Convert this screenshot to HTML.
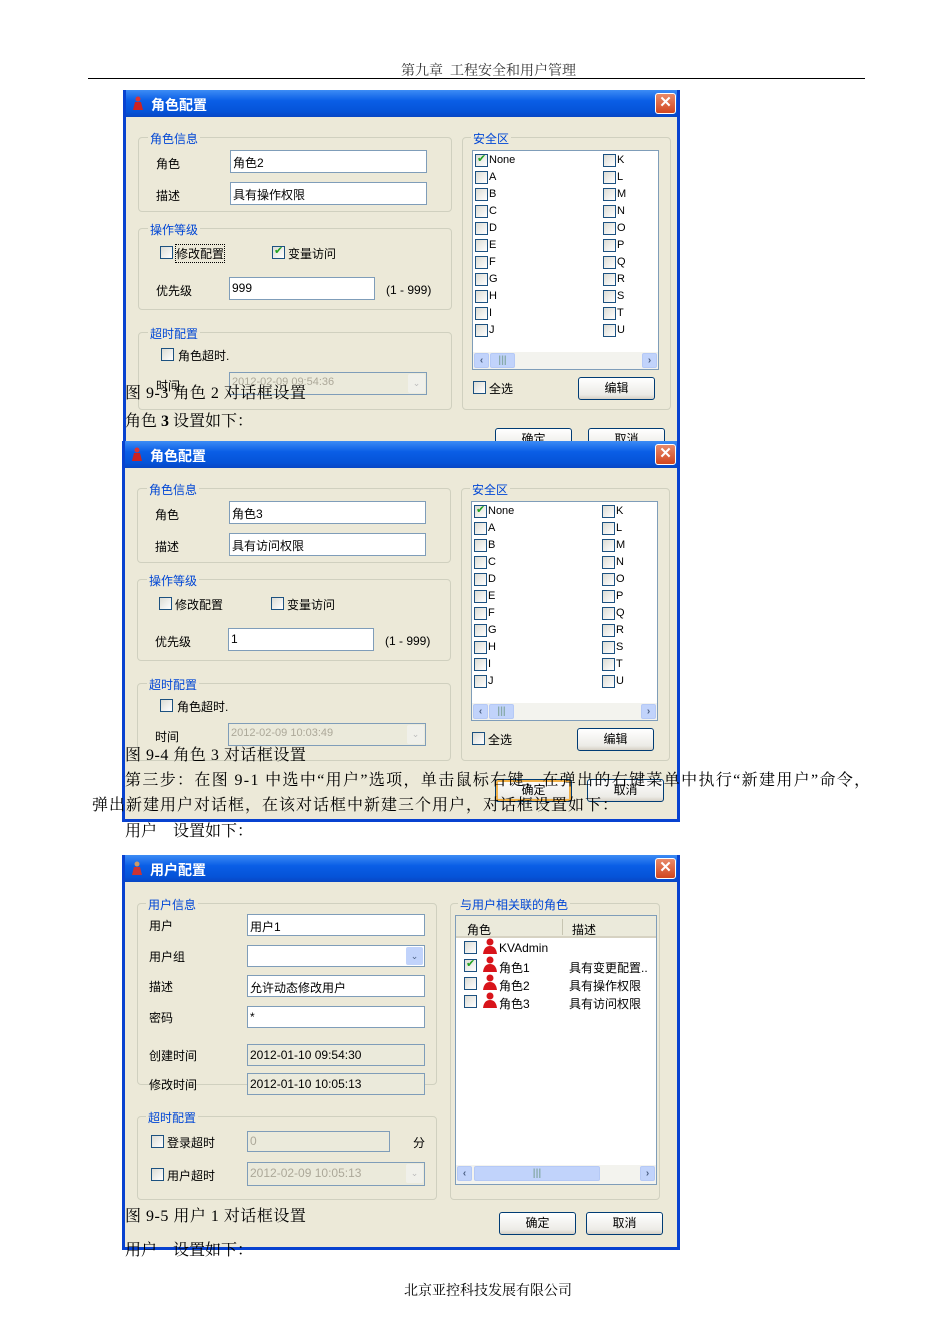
<!DOCTYPE html>
<html><head><meta charset="utf-8"><style>
*{margin:0;padding:0;box-sizing:border-box}
body{width:950px;height:1344px;background:#fff;position:relative;overflow:hidden;font-family:"Liberation Sans","Noto Sans CJK SC",sans-serif;font-size:12px;color:#000}
.a{position:absolute;white-space:nowrap}
.dlg{position:absolute;background:#ece9d8;border:3px solid #0842d0;border-top:none;overflow:hidden}
.tb{position:absolute;left:-3px;right:-3px;top:0;height:27px;background:linear-gradient(#3d8cf5,#0a5ee6 40%,#0553d8 80%,#0846c4);color:#fff;font-weight:bold;font-size:14px}
.tb span{position:absolute;left:28px;top:5px}
.ico{position:absolute;left:10px;top:6px;width:10px;height:14px}
.x{position:absolute;right:4px;top:3px;width:21px;height:21px;background:linear-gradient(#e88a6a,#d2461f);border:1px solid #fff;border-radius:3px;color:#fff;font-size:15px;font-weight:bold;text-align:center;line-height:18px}
.g{position:absolute;border:1px solid #d0d0bf;border-radius:4px}
.gl{position:absolute;color:#0046d5;background:#ece9d8;padding:0 2px;font-size:12px}
.in{position:absolute;background:#fff;border:1px solid #7f9db9;height:23px;padding:3px 2px;font-size:12px}
.dis{background:#ebeadb;color:#aca899}
.cb{position:absolute;width:13px;height:13px;border:1px solid #1c5180;background:linear-gradient(135deg,#dcdcd5,#fff)}
.ck::after{content:"✔";position:absolute;left:1px;top:-3px;color:#21a121;font-size:11px}
.bt{position:absolute;height:23px;border:1px solid #003c74;border-radius:3px;background:linear-gradient(#fff,#ecebe6 80%,#d6d0c5);text-align:center;line-height:21px;font-size:12px}
.lb{position:absolute;background:#fff;border:1px solid #7f9db9}
.sb{position:absolute;left:0;right:0;bottom:0;height:17px;background:#f3f3ee}
.sa{position:absolute;top:1px;width:15px;height:15px;background:#c1d3fb;border:1px solid #b5c9f6;border-radius:2px;font-size:10px;line-height:13px;text-align:center;color:#4d6185;font-weight:bold}
.dd{position:absolute;right:1px;top:1px;width:17px;height:19px;background:#c1d3fb;border-radius:2px;color:#4d6185;font-size:9px;text-align:center;line-height:19px}
.sf{font-family:"Liberation Serif","Noto Serif CJK SC",serif;font-size:16px}
</style></head><body>

<div class="a sf" style="left:401px;top:60px;font-size:14px;color:#333">第九章&nbsp;&nbsp;工程安全和用户管理</div>
<div class="a" style="left:88px;top:78px;width:777px;height:1px;background:#000"></div>

<!-- Dialog 1 -->
<div class="dlg" style="left:123px;top:90px;width:557px;height:381px">
 <div class="tb"><svg class="ico" viewBox="0 0 10 14"><circle cx="5" cy="3" r="2.5" fill="#d33"/><path d="M0 14 L2 6 L8 6 L10 14Z" fill="#c22"/></svg><span>角色配置</span><div class="x">✕</div></div>
 <div class="g" style="left:12px;top:47px;width:314px;height:75px"></div><div class="gl" style="left:22px;top:40px">角色信息</div>
 <div class="a" style="left:30px;top:65px">角色</div><div class="in" style="left:104px;top:60px;width:197px">角色2</div>
 <div class="a" style="left:30px;top:97px">描述</div><div class="in" style="left:104px;top:92px;width:197px">具有操作权限</div>
 <div class="g" style="left:12px;top:138px;width:314px;height:82px"></div><div class="gl" style="left:22px;top:131px">操作等级</div>
 <div class="cb" style="left:34px;top:156px"></div><div class="a" style="left:50px;top:155px;outline:1px dotted #000">修改配置</div>
 <div class="cb ck" style="left:146px;top:156px"></div><div class="a" style="left:162px;top:155px">变量访问</div>
 <div class="a" style="left:30px;top:192px">优先级</div><div class="in" style="left:103px;top:187px;width:146px">999</div><div class="a" style="left:260px;top:193px">(1 - 999)</div>
 <div class="g" style="left:12px;top:242px;width:314px;height:78px"></div><div class="gl" style="left:22px;top:235px">超时配置</div>
 <div class="cb" style="left:35px;top:258px"></div><div class="a" style="left:52px;top:257px">角色超时.</div>
 <div class="a" style="left:30px;top:287px">时间</div><div class="in dis" style="left:103px;top:282px;width:198px;font-size:11px">2012-02-09 09:54:36<div class="dd" style="background:#f0f0ea;color:#bbb">⌄</div></div>
 <div class="g" style="left:336px;top:47px;width:209px;height:273px"></div><div class="gl" style="left:345px;top:40px">安全区</div>
 <div class="lb" style="left:346px;top:60px;width:187px;height:220px" id="l1"></div>
 <div class="cb" style="left:347px;top:291px"></div><div class="a" style="left:363px;top:290px">全选</div>
 <div class="bt" style="left:452px;top:287px;width:77px">编辑</div>
 <div class="bt" style="left:369px;top:338px;width:77px">确定</div><div class="bt" style="left:462px;top:338px;width:77px">取消</div>
</div>

<!-- Dialog 2 -->
<div class="dlg" style="left:122px;top:441px;width:558px;height:381px">
 <div class="tb"><svg class="ico" viewBox="0 0 10 14"><circle cx="5" cy="3" r="2.5" fill="#d33"/><path d="M0 14 L2 6 L8 6 L10 14Z" fill="#c22"/></svg><span>角色配置</span><div class="x">✕</div></div>
 <div class="g" style="left:12px;top:47px;width:314px;height:75px"></div><div class="gl" style="left:22px;top:40px">角色信息</div>
 <div class="a" style="left:30px;top:65px">角色</div><div class="in" style="left:104px;top:60px;width:197px">角色3</div>
 <div class="a" style="left:30px;top:97px">描述</div><div class="in" style="left:104px;top:92px;width:197px">具有访问权限</div>
 <div class="g" style="left:12px;top:138px;width:314px;height:82px"></div><div class="gl" style="left:22px;top:131px">操作等级</div>
 <div class="cb" style="left:34px;top:156px"></div><div class="a" style="left:50px;top:155px">修改配置</div>
 <div class="cb" style="left:146px;top:156px"></div><div class="a" style="left:162px;top:155px">变量访问</div>
 <div class="a" style="left:30px;top:192px">优先级</div><div class="in" style="left:103px;top:187px;width:146px">1</div><div class="a" style="left:260px;top:193px">(1 - 999)</div>
 <div class="g" style="left:12px;top:242px;width:314px;height:78px"></div><div class="gl" style="left:22px;top:235px">超时配置</div>
 <div class="cb" style="left:35px;top:258px"></div><div class="a" style="left:52px;top:257px">角色超时.</div>
 <div class="a" style="left:30px;top:287px">时间</div><div class="in dis" style="left:103px;top:282px;width:198px;font-size:11px">2012-02-09 10:03:49<div class="dd" style="background:#f0f0ea;color:#bbb">⌄</div></div>
 <div class="g" style="left:336px;top:47px;width:209px;height:273px"></div><div class="gl" style="left:345px;top:40px">安全区</div>
 <div class="lb" style="left:346px;top:60px;width:187px;height:220px" id="l2"></div>
 <div class="cb" style="left:347px;top:291px"></div><div class="a" style="left:363px;top:290px">全选</div>
 <div class="bt" style="left:452px;top:287px;width:77px">编辑</div>
 <div class="bt" style="left:370px;top:338px;width:77px;box-shadow:inset 0 0 0 2px #f0b048">确定</div><div class="bt" style="left:462px;top:338px;width:77px">取消</div>
</div>

<!-- Dialog 3 -->
<div class="dlg" style="left:122px;top:855px;width:558px;height:395px">
 <div class="tb"><svg class="ico" viewBox="0 0 10 14"><circle cx="5" cy="3" r="2.5" fill="#c96"/><path d="M0 14 L2 6 L8 6 L10 14Z" fill="#c33"/></svg><span>用户配置</span><div class="x">✕</div></div>
 <div class="g" style="left:12px;top:48px;width:300px;height:182px"></div><div class="gl" style="left:21px;top:41px">用户信息</div>
 <div class="a" style="left:24px;top:62px">用户</div><div class="in" style="left:122px;top:59px;width:178px;height:22px">用户1</div>
 <div class="a" style="left:24px;top:93px">用户组</div><div class="in" style="left:122px;top:90px;width:178px;height:22px"><div class="dd" style="height:18px">⌄</div></div>
 <div class="a" style="left:24px;top:123px">描述</div><div class="in" style="left:122px;top:120px;width:178px;height:22px">允许动态修改用户</div>
 <div class="a" style="left:24px;top:154px">密码</div><div class="in" style="left:122px;top:151px;width:178px;height:22px">*</div>
 <div class="a" style="left:24px;top:192px">创建时间</div><div class="in" style="left:122px;top:189px;width:178px;height:22px;background:#ebeadb">2012-01-10 09:54:30</div>
 <div class="a" style="left:24px;top:221px">修改时间</div><div class="in" style="left:122px;top:218px;width:178px;height:22px;background:#ebeadb">2012-01-10 10:05:13</div>
 <div class="g" style="left:12px;top:261px;width:300px;height:84px"></div><div class="gl" style="left:21px;top:254px">超时配置</div>
 <div class="cb" style="left:26px;top:280px"></div><div class="a" style="left:42px;top:279px">登录超时</div>
 <div class="in dis" style="left:122px;top:276px;width:143px;height:21px;padding:2px">0</div><div class="a" style="left:288px;top:279px">分</div>
 <div class="cb" style="left:26px;top:313px"></div><div class="a" style="left:42px;top:312px">用户超时</div>
 <div class="in dis" style="left:122px;top:307px;width:178px;height:24px">2012-02-09 10:05:13<div class="dd" style="background:#f0f0ea;color:#bbb">⌄</div></div>
 <div class="g" style="left:325px;top:48px;width:210px;height:297px"></div><div class="gl" style="left:333px;top:41px">与用户相关联的角色</div>
 <div class="lb" style="left:330px;top:60px;width:202px;height:270px">
  <div style="position:absolute;left:0;right:0;top:0;height:22px;background:#ebeadb;border-bottom:2px solid #d6d2c2"></div>
  <div class="a" style="left:11px;top:5px">角色</div><div class="a" style="left:106px;top:3px;width:1px;height:16px;background:#c7c5b2"></div><div class="a" style="left:116px;top:5px">描述</div>
  <div class="cb" style="left:8px;top:25px"></div><div class="cb ck" style="left:8px;top:43px"></div><div class="cb" style="left:8px;top:61px"></div><div class="cb" style="left:8px;top:79px"></div>
  <svg class="a" style="left:26px;top:22px" width="16" height="72" viewBox="0 0 16 72"><g fill="#d8141a"><circle cx="8" cy="4" r="3.5"/><path d="M1 16 Q2 8 8 8 Q14 8 15 16Z"/><circle cx="8" cy="22" r="3.5"/><path d="M1 34 Q2 26 8 26 Q14 26 15 34Z"/><circle cx="8" cy="40" r="3.5"/><path d="M1 52 Q2 44 8 44 Q14 44 15 52Z"/><circle cx="8" cy="58" r="3.5"/><path d="M1 70 Q2 62 8 62 Q14 62 15 70Z"/></g></svg>
  <div class="a" style="left:43px;top:25px">KVAdmin</div><div class="a" style="left:43px;top:43px">角色1</div><div class="a" style="left:43px;top:61px">角色2</div><div class="a" style="left:43px;top:79px">角色3</div>
  <div class="a" style="left:113px;top:43px">具有变更配置..</div><div class="a" style="left:113px;top:61px">具有操作权限</div><div class="a" style="left:113px;top:79px">具有访问权限</div>
  <div class="sb" style="height:19px"><div class="sa" style="left:1px">‹</div><div class="sa" style="left:18px;width:126px;color:#8aa">|||</div><div class="sa" style="right:1px">›</div></div>
 </div>
 <div class="bt" style="left:374px;top:357px;width:77px">确定</div><div class="bt" style="left:461px;top:357px;width:77px">取消</div>
</div>

<div class="a sf" style="left:125px;top:380px;letter-spacing:0.5px">图 9-3 角色 2 对话框设置</div>
<div class="a sf" style="left:125px;top:408px">角色 <b>3</b> 设置如下：</div>
<div class="a sf" style="left:125px;top:742px;letter-spacing:0.5px">图 9-4 角色 3 对话框设置</div>
<div class="a sf" style="left:125px;top:767px;letter-spacing:1.35px">第三步：在图 9-1 中选中“用户”选项，单击鼠标右键，在弹出的右键菜单中执行“新建用户”命令，</div>
<div class="a sf" style="left:92px;top:792px;letter-spacing:1px">弹出新建用户对话框，在该对话框中新建三个用户，对话框设置如下：</div>
<div class="a sf" style="left:125px;top:818px">用户　设置如下：</div>
<div class="a sf" style="left:125px;top:1203px;letter-spacing:0.5px">图 9-5 用户 1 对话框设置</div>
<div class="a sf" style="left:125px;top:1237px">用户　设置如下：</div>
<div class="a sf" style="left:404px;top:1280px;font-size:14px">北京亚控科技发展有限公司</div>

<script>
['l1','l2'].forEach(function(id){
 var el=document.getElementById(id),h='';
 var L=['None','A','B','C','D','E','F','G','H','I','J'],R='KLMNOPQRSTU';
 for(var i=0;i<11;i++){
  h+='<div class="cb'+(i==0?' ck':'')+'" style="left:2px;top:'+(3+i*17)+'px"></div><div class="a" style="left:16px;top:'+(3+i*17)+'px;font-size:11px">'+L[i]+'</div>';
  h+='<div class="cb" style="left:130px;top:'+(3+i*17)+'px"></div><div class="a" style="left:144px;top:'+(3+i*17)+'px;font-size:11px">'+R[i]+'</div>';
 }
 h+='<div class="sb"><div class="sa" style="left:1px">‹</div><div class="sa" style="left:17px;width:25px;color:#8aa">|||</div><div class="sa" style="right:1px">›</div></div>';
 el.innerHTML=h;
});
</script>
</body></html>
